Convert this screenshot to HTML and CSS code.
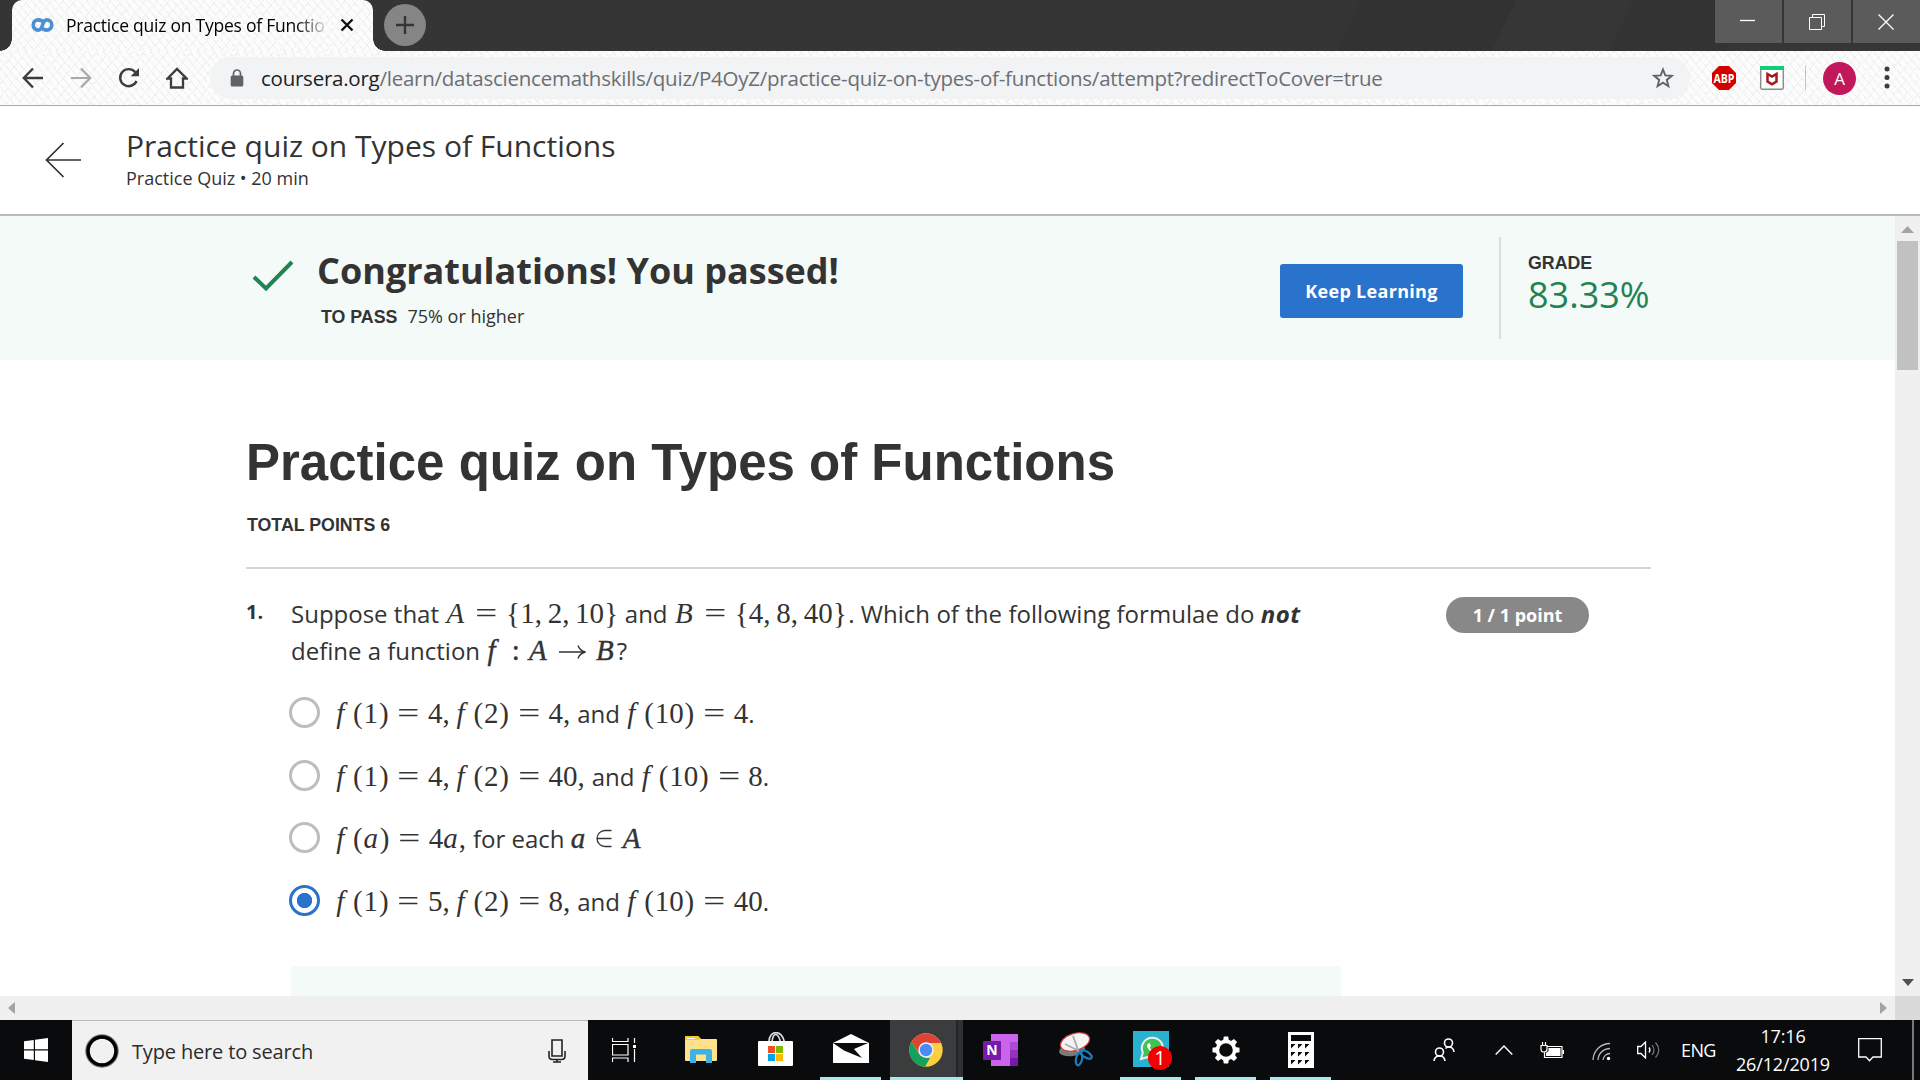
FILE: index.html
```html
<!DOCTYPE html>
<html lang="en">
<head>
<meta charset="utf-8">
<title>Practice quiz on Types of Functions</title>
<link rel="stylesheet" href="styles.css">
</head>
<body>
<div class="tabstrip">
  <div class="tab">
    <svg class="tab-logo" width="23" height="14" viewBox="0 0 23 14"><path d="M12.500 4.500C11.200 2.600 9.500 1.900 7.300 1.900A5.100 5.100 0 0 0 7.300 12.100C12.300 12.100 10.700 1.900 15.700 1.900A5.100 5.100 0 0 1 15.700 12.100C13.500 12.100 11.800 11.400 10.500 9.500" fill="none" stroke="#4a90d2" stroke-width="3.600"/></svg>
    <span class="tab-title">Practice quiz on Types of Functio</span>
    <svg class="tab-close" width="14" height="14" viewBox="0 0 14 14"><path d="M1.500 1.500 12.500 12.500M12.500 1.500 1.500 12.500" stroke="#111" stroke-width="2.400"/></svg>
  </div>
  <div class="new-tab"><svg width="18" height="18" viewBox="0 0 18 18"><path d="M9 0V18M0 9H18" stroke="#353535" stroke-width="2.400"/></svg></div>
  <div class="win-buttons">
    <span><svg width="16" height="16" viewBox="0 0 16 16"><path d="M0 6.500H15" stroke="#fff" stroke-width="1.300"/></svg></span>
    <span><svg width="16" height="16" viewBox="0 0 16 16"><path d="M3.500 3.500V.5H15.500V12.500H12.500M.5 3.500H12.500V15.500H.5Z" fill="none" stroke="#fff"/></svg></span>
    <span><svg width="16" height="16" viewBox="0 0 16 16"><path d="M.5 .5 15.500 15.500M15.500 .5 .5 15.500" stroke="#fff" stroke-width="1.300"/></svg></span>
  </div>
</div>
<div class="toolbar">
  <svg class="nav" width="22" height="22" viewBox="0 0 22 22"><path d="M21 11H2M11 1.500 1.800 11 11 20.500" fill="none" stroke="#3c3c3c" stroke-width="2.400"/></svg>
  <svg class="nav" width="22" height="22" viewBox="0 0 22 22"><path d="M1 11H20M11 1.500 20.200 11 11 20.500" fill="none" stroke="#a8a8a8" stroke-width="2.200"/></svg>
  <svg class="nav" width="22" height="22" viewBox="0 0 22 22"><path d="M18.500 14A8.500 8.500 0 1 1 17.300 5.300" fill="none" stroke="#3c3c3c" stroke-width="2.400"/><path d="M21 1V9.300H12.700Z" fill="#3c3c3c"/></svg>
  <svg class="nav" width="22" height="22" viewBox="0 0 22 22"><path d="M1.500 11.500 11 2 20.500 11.500H17V20.500H5V11.500Z" fill="none" stroke="#3c3c3c" stroke-width="2.300"/></svg>
  <div class="omnibox">
    <svg class="lock" width="14" height="18" viewBox="0 0 14 18"><rect x=".7" y="6.500" width="12.600" height="11" rx="1.500" fill="#5f6368"/><path d="M3.500 7V4.500A3.500 3.500 0 0 1 10.500 4.500V7" fill="none" stroke="#5f6368" stroke-width="1.700"/></svg>
    <span class="url"><b>coursera.org</b>/learn/datasciencemathskills/quiz/P4OyZ/practice-quiz-on-types-of-functions/attempt?redirectToCover=true</span>
    <svg class="star" width="22" height="22" viewBox="0 0 22 22"><path d="M11 2.500 13.300 8.400 19.800 8.800 14.800 12.900 16.400 19.200 11 15.700 5.600 19.200 7.200 12.900 2.200 8.800 8.700 8.400Z" fill="none" stroke="#5f6368" stroke-width="1.900"/></svg>
  </div>
  <svg class="abp" width="26" height="26" viewBox="0 0 26 26"><path d="M8 1H18L25 8V18L18 25H8L1 18V8Z" fill="#d40000"/><text x="13" y="17.500" text-anchor="middle" textLength="21" lengthAdjust="spacingAndGlyphs">ABP</text></svg>
  <svg class="mcafee" width="24" height="24" viewBox="0 0 24 24"><rect x=".7" y=".7" width="22.600" height="22.600" rx="1.500" fill="#fff" stroke="#8c8c8c" stroke-width="1.400"/><path d="M0 0H24V4H0Z" fill="#12ce78"/><path d="M7.500 8 12 10.600 16.500 8V15.500L12 18.300 7.500 15.500Z" fill="none" stroke="#a3191d" stroke-width="2.500"/></svg>
  <i class="sep"></i>
  <span class="avatar">A</span>
  <svg class="dots" width="6" height="24" viewBox="0 0 6 24"><g fill="#3c3c3c"><circle cx="3" cy="3" r="2.500"/><circle cx="3" cy="11.500" r="2.500"/><circle cx="3" cy="20" r="2.500"/></g></svg>
</div>

<header class="quiz-header">
  <svg width="36" height="36" viewBox="0 0 36 36"><path d="M36 18H1.500M18.500 1 1.500 18 18.500 35" fill="none" stroke="#333" stroke-width="1.700"/></svg>
  <div>
    <div class="quiz-title">Practice quiz on Types of Functions</div>
    <div class="quiz-sub">Practice Quiz • 20 min</div>
  </div>
</header>

<div class="viewport">
  <main class="page">
    <section class="banner">
      <svg class="check" width="42" height="32" viewBox="0 0 42 32"><path d="M2 17 14 28.500 40 2" fill="none" stroke="#1f8354" stroke-width="4"/></svg>
      <div class="result">
        <div class="congrats">Congratulations! You passed!</div>
        <div class="to-pass"><b>TO PASS</b><span>75% or higher</span></div>
      </div>
      <button class="keep">Keep Learning</button>
      <div class="grade"><b>GRADE</b><span>83.33%</span></div>
    </section>
    <section class="content">
      <h1>Practice quiz on Types of Functions</h1>
      <div class="points">TOTAL POINTS 6</div>
      <div class="question">
        <div class="number">1.</div>
        <div class="body">
          <div class="prompt">
            <div><span class="t1">Suppose that</span> <span class="m"><i class="cap">A</i><u>=</u><s>{</s><q>1</q><em>,</em><q>2</q><em>,</em><q>10</q><s>}</s></span> <span class="t2">and</span> <span class="m"><i class="cap">B</i><u>=</u><s>{</s><q>4</q><em>,</em><q>8</q><em>,</em><q>40</q><s>}</s></span><span class="t3">. Which of the following formulae do <strong>not</strong></span></div>
            <div><span class="t1">define a function</span> <span class="m heavy"><i class="f">f</i><u class="colon">:</u><i class="cap">A</i><u class="arrow"><svg width="29" height="16" viewBox="0 0 29 16"><path d="M1 8H27M20 1.500Q21.500 6.500 27.500 8Q21.500 9.500 20 14.500" fill="none" stroke="#333" stroke-width="1.300"/></svg></u><i class="cap">B</i></span><span class="qm">?</span></div>
          </div>
          <div class="options">
            <div class="option"><i class="radio"></i><div><span class="m"><i class="f">f</i><s class="p">(</s><q>1</q><s class="p">)</s><u>=</u><q>4</q><em>,</em><i class="f">f</i><s class="p">(</s><q>2</q><s class="p">)</s><u>=</u><q>4</q><em class="end">,</em></span> <span>and</span> <span class="m"><i class="f">f</i><s class="p">(</s><q>10</q><s class="p">)</s><u>=</u><q>4</q></span>.</div></div>
            <div class="option"><i class="radio"></i><div><span class="m"><i class="f">f</i><s class="p">(</s><q>1</q><s class="p">)</s><u>=</u><q>4</q><em>,</em><i class="f">f</i><s class="p">(</s><q>2</q><s class="p">)</s><u>=</u><q>40</q><em class="end">,</em></span> <span>and</span> <span class="m"><i class="f">f</i><s class="p">(</s><q>10</q><s class="p">)</s><u>=</u><q>8</q></span>.</div></div>
            <div class="option"><i class="radio"></i><div><span class="m"><i class="f">f</i><s class="p">(</s><i class="a">a</i><s class="p">)</s><u>=</u><q>4</q><i class="a">a</i><em class="end">,</em></span> <span>for each</span> <span class="m"><i class="a heavy">a</i><u class="in"><svg width="18" height="19" viewBox="0 0 18 19"><path d="M16.500 1.500H10A7.800 7.800 0 0 0 10 17.500H16.500M2 9.500H16.500" fill="none" stroke="#333" stroke-width="1.300"/></svg></u><i class="cap heavy">A</i></span></div></div>
            <div class="option"><i class="radio on"></i><div><span class="m"><i class="f">f</i><s class="p">(</s><q>1</q><s class="p">)</s><u>=</u><q>5</q><em>,</em><i class="f">f</i><s class="p">(</s><q>2</q><s class="p">)</s><u>=</u><q>8</q><em class="end">,</em></span> <span>and</span> <span class="m"><i class="f">f</i><s class="p">(</s><q>10</q><s class="p">)</s><u>=</u><q>40</q></span>.</div></div>
          </div>
          <div class="feedback"></div>
        </div>
        <div class="pill">1 / 1 point</div>
      </div>
    </section>
  </main>
  <div class="vscroll">
    <svg width="13" height="7" viewBox="0 0 13 7"><path d="M6.500 0 13 7H0Z" fill="#a3a3a3"/></svg>
    <i class="thumb"></i>
    <svg class="down" width="12" height="7" viewBox="0 0 12 7"><path d="M0 0H12L6 7Z" fill="#505050"/></svg>
  </div>
</div>
<div class="hscroll">
  <svg width="7" height="12" viewBox="0 0 7 12"><path d="M7 0V12L0 6Z" fill="#a3a3a3"/></svg>
  <svg class="right" width="7" height="12" viewBox="0 0 7 12"><path d="M0 0V12L7 6Z" fill="#a3a3a3"/></svg>
  <i class="corner"></i>
</div>

<footer class="taskbar">
  <div class="start"><svg width="24" height="24" viewBox="0 0 24 24"><path d="M0 3.300 9.800 2V11.300H0ZM11 1.800 24 0V11.300H11ZM0 12.500H9.800V22L0 20.700ZM11 12.500H24V24L11 22.200Z" fill="#fff"/></svg></div>
  <div class="search">
    <svg width="34" height="34" viewBox="0 0 34 34"><circle cx="17" cy="17" r="14.500" fill="none" stroke="#777" stroke-width="4.500"/><circle cx="17" cy="17" r="14" fill="none" stroke="#000" stroke-width="3.400"/></svg>
    <span>Type here to search</span>
    <svg class="mic" width="18" height="24" viewBox="0 0 18 24"><path d="M4 1H14V17H4ZM1 12V17Q1 20.500 4.500 20.500H13.500Q17 20.500 17 17V12M9 20.500V23M5 23H13" fill="none" stroke="#222" stroke-width="1.600"/></svg>
  </div>
  <div class="apps">
    <div class="app view"><svg width="25" height="24" viewBox="0 0 25 24"><path d="M.5 0V3.500H16V0M.5 6.500H16V17H.5ZM.5 24V20H16V24M22.500 0V5M22.500 11V24" fill="none" stroke="#fff" stroke-width="1.200"/><path d="M21 7H24V10H21Z" fill="#fff"/></svg></div>
    <div class="app"><svg width="32" height="27" viewBox="0 0 32 27"><path d="M0 1Q0 0 1 0H13L16 3H31Q32 3 32 4V24Q32 25 31 25H1Q0 25 0 24Z" fill="#ffe28b"/><path d="M0 0H13L15.500 2.500 13.500 4H0Z" fill="#fbc52c"/><path d="M2 2.500H10" stroke="#fff"/><path d="M5 27V15Q5 13 7 13H25Q27 13 27 15V27H21V18.500H11V27Z" fill="#3db2e6"/></svg></div>
    <div class="app store"><svg width="35" height="34" viewBox="0 0 35 34"><path d="M11 10C11 -2.500 24 -2.500 26.500 10M14 10C15 0 20 0 22.500 10" fill="none" stroke="#ddd" stroke-width="1.700"/><rect y="9" width="35" height="25" rx="1" fill="#fff"/><path d="M10 14H17V21H10Z" fill="#f25022"/><path d="M18 14H25V21H18Z" fill="#7fba00"/><path d="M10 22H17V29H10Z" fill="#00a4ef"/><path d="M18 22H25V29H18Z" fill="#ffb900"/></svg></div>
    <div class="app open mail"><svg width="36" height="29" viewBox="0 0 36 29"><path d="M0 9 18 0 36 9V29H0Z" fill="#fff"/><path d="M0 9H35L21 15 29 24 11 16.500Z" fill="#0a0b0d"/></svg></div>
    <div class="app open chrome"><svg width="34" height="34" viewBox="0 0 34 34"><circle cx="17" cy="17" r="16.700" fill="#ffcd40"/><path d="M2.500 8.700A16.700 16.700 0 0 1 32 10H17L10 20.500Z" fill="#dc4437"/><path d="M2.500 8.700 10 21 17 25H21L16 33.700A16.700 16.700 0 0 1 2.500 8.700Z" fill="#12a15e"/><circle cx="17" cy="17" r="7.700" fill="#f2f2f2"/><circle cx="17" cy="17" r="6.200" fill="#4c8bf5"/></svg></div>
    <div class="app"><svg width="35" height="32" viewBox="0 0 35 32"><rect x="8" width="27" height="32" fill="#ca64ea"/><path d="M27 8H35V16H27Z" fill="#ae4bd5"/><path d="M27 16H35V24H27Z" fill="#9332bf"/><path d="M27 24H35V32H27Z" fill="#7719aa"/><rect y="7" width="18" height="19" rx="1" fill="#7719aa"/><text x="9" y="21" text-anchor="middle" class="note-n">N</text></svg></div>
    <div class="app"><svg width="34" height="36" viewBox="0 0 34 36"><ellipse cx="13" cy="18" rx="13" ry="6" fill="#7a7a7a" transform="rotate(-8 13 18)"/><ellipse cx="16" cy="10" rx="15" ry="8.500" fill="#f4f4f4" stroke="#d8393b" stroke-width="1.200" transform="rotate(-17 16 10)"/><path d="M14 4 19 18M6 12 20 19" stroke="#aaa" stroke-width="1.800"/><ellipse cx="20" cy="27" rx="3" ry="6.500" fill="none" stroke="#1a7fc1" stroke-width="2.200" transform="rotate(12 20 27)"/><ellipse cx="27" cy="22.500" rx="3" ry="6.500" fill="none" stroke="#1a7fc1" stroke-width="2.200" transform="rotate(-58 27 22.500)"/></svg></div>
    <div class="app open"><svg width="39" height="40" viewBox="0 0 39 40" class="wa"><rect width="36" height="36" fill="#28b2d0"/><path d="M8 28 9.800 21.500A10.500 10.500 0 1 1 14 26.200Z" fill="#3fc351" stroke="#eee" stroke-width="2"/><path d="M14.500 13Q13 16 17 20T24 22.500L25 20 21.800 18.500 20 20Q17.500 18.500 16.800 16.500L18 15 16.500 12Z" fill="#fff"/><circle cx="27" cy="27" r="12" fill="#f40000"/><text x="27" y="34" text-anchor="middle" class="badge">1</text></svg></div>
    <div class="app open"><svg width="28" height="28" viewBox="-14 -14 28 28"><g fill="#fff"><path id="tooth" d="M-3 -9 -2.200 -13.500H2.200L3 -9Z"/><use href="#tooth" transform="rotate(45)"/><use href="#tooth" transform="rotate(90)"/><use href="#tooth" transform="rotate(135)"/><use href="#tooth" transform="rotate(180)"/><use href="#tooth" transform="rotate(225)"/><use href="#tooth" transform="rotate(270)"/><use href="#tooth" transform="rotate(315)"/></g><circle r="8.600" fill="none" stroke="#fff" stroke-width="3.600"/></svg></div>
    <div class="app open"><svg width="26" height="36" viewBox="0 0 26 36"><path d="M0 0H26V36H0Z" fill="#fff"/><path d="M3 3H23V9H3ZM3 12H7.500L3 16.500ZM10 12H14.500L10 16.500ZM17 12H21.500L17 16.500ZM3 20H7.500L3 24.500ZM10 20H14.500L10 24.500ZM17 20H21.500L17 24.500ZM3 28H7.500L3 32.500ZM10 28H14.500L10 32.500ZM17 28H21.500L17 32.500Z" fill="#0a0b0d"/></svg></div>
  </div>
  <div class="tray">
    <svg class="people" width="22" height="24" viewBox="0 0 22 24"><g fill="none" stroke="#fff" stroke-width="1.600"><circle cx="15.500" cy="5" r="4"/><circle cx="6.500" cy="14" r="4"/><path d="M1 23Q1.500 18 6.500 18T12 23M12.500 10.500Q14 9 15.500 9Q20.500 9 21 14"/></g></svg>
    <svg class="chev" width="18" height="10" viewBox="0 0 18 10"><path d="M.7 9.500 9 1 17.300 9.500" fill="none" stroke="#fff" stroke-width="1.400"/></svg>
    <svg class="batt" width="24" height="17" viewBox="0 0 24 17"><path d="M7.500 4.500H22V15.500H4.500V10M2.500 0V3.500M5.500 0V3.500M1 3.500H7V7Q7 10 4 10T1 7Z" fill="none" stroke="#fff" stroke-width="1.200"/><path d="M8.500 6H20.500V14H6V11L8.500 9ZM22.500 8H24V12H22.500Z" fill="#fff"/></svg>
    <svg class="wifi" width="19" height="19" viewBox="0 0 19 19"><g fill="none" stroke="#bbb" stroke-width="1.300"><path d="M1 18A17 17 0 0 1 18 1.500M6 18A12 12 0 0 1 18 6.500M11 18A7 7 0 0 1 18 11.500"/></g><circle cx="16.500" cy="16.500" r="1.700" fill="#fff"/></svg>
    <svg class="vol" width="23" height="18" viewBox="0 0 23 18"><path d="M.7 5.500H4L8.500 1V17L4 12.500H.7Z" fill="none" stroke="#fff" stroke-width="1.300"/><path d="M12 6.500Q14 9 12 11.500" fill="none" stroke="#fff" stroke-width="1.300"/><path d="M15 4Q19 9 15 14M18.500 1.500Q25 9 18.500 16.500" fill="none" stroke="#777" stroke-width="1.200"/></svg>
    <span class="lang">ENG</span>
    <div class="clock"><span class="time">17:16</span><span>26/12/2019</span></div>
    <svg class="notif" width="24" height="24" viewBox="0 0 24 24"><path d="M.7 .7H23.300V19H15L11.500 22.800 8 19H.7Z" fill="none" stroke="#fff" stroke-width="1.300"/></svg>
    <i class="desk"></i>
  </div>
</footer>
</body>
</html>
```
FILE: styles.css
```css
* { box-sizing: border-box; }
body { margin: 0; width: 1920px; height: 1080px; overflow: hidden; display: flex; flex-direction: column; background: #fff; color: #333; font-family: "Open Sans", "Noto Sans", sans-serif; }
svg { display: block; flex: none; }

/* browser chrome */
.tabstrip { height: 51px; flex: none; display: flex; background: linear-gradient(115deg, #353535 0 70%, #323232 70% 78%, #363636 78% 84%, #333 84% 90%, #363636 90%); }
.tab, .toolbar { background-color: #fcfcfc; background-image: repeating-linear-gradient(50deg, transparent 0 5px, #f0f0f0 5px 6px), repeating-linear-gradient(-50deg, transparent 0 8px, #f2f2f2 8px 9px); }
.tab { position: relative; width: 361px; margin-left: 12px; border-radius: 10px 10px 0 0; display: flex; align-items: center; padding: 0 19px 1px; }
.tab::before, .tab::after { content: ""; position: absolute; bottom: 0; width: 12px; height: 12px; }
.tab::before { left: -12px; background: radial-gradient(circle at 0 0, transparent 11.500px, #fafafa 12px); }
.tab::after { right: -12px; background: radial-gradient(circle at 100% 0, transparent 11.500px, #fafafa 12px); }
.tab-title { margin-left: 12px; width: 264px; overflow: hidden; white-space: nowrap; font-size: 17.500px; letter-spacing: -0.240px; line-height: 26px; color: #000; -webkit-mask-image: linear-gradient(90deg, #000 88%, transparent 101%); mask-image: linear-gradient(90deg, #000 88%, transparent 101%); }
.tab-close { margin-left: 13px; }
.new-tab { width: 42px; height: 42px; margin: 4px 0 0 11px; border-radius: 50%; background: #858585; display: grid; place-items: center; }
.win-buttons { margin-left: auto; display: flex; gap: 2px; }
.win-buttons span { width: 67px; height: 43px; padding-right: 2px; background: #5b5b5b; display: grid; place-items: center; }
.toolbar { height: 55px; flex: none; display: flex; align-items: center; padding-left: 22px; border-bottom: 1px solid #aaa; }
.nav { margin-right: 26px; }
.omnibox { width: 1480px; height: 42px; margin-left: -4px; border-radius: 21px; background: #f1f3f4; display: flex; align-items: center; padding: 0 16px 0 20px; }
.url { margin-left: 17px; font-size: 20.500px; letter-spacing: -0.245px; color: #6b6f73; white-space: nowrap; }
.url b { font-weight: 400; color: #202124; }
.star { margin-left: auto; }
.abp { margin-left: 21px; }
.abp text { font: bold 12px "Open Sans", sans-serif; fill: #fff; }
.mcafee { margin-left: 23px; }
.sep { width: 1px; height: 24px; margin-left: 21px; background: #c3c3c3; }
.avatar { width: 33px; height: 33px; margin-left: 17px; border-radius: 50%; background: #c2185b; color: #fff; font-size: 17px; display: grid; place-items: center; }
.dots { margin-left: 28px; }

/* quiz header */
.quiz-header { height: 110px; flex: none; display: flex; align-items: center; padding-left: 45px; border-bottom: 2px solid #bbb; }
.quiz-header > div { margin-left: 45px; margin-top: -3px; white-space: nowrap; }
.quiz-title { font-size: 30px; line-height: 38px; }
.quiz-sub { font-size: 18px; line-height: 26px; }

.viewport { height: 780px; flex: none; display: flex; }
.page { width: 1895px; overflow: hidden; }
.banner { height: 144px; background: #f4faf8; display: flex; padding-left: 252px; }
.check { margin-top: 44px; }
.result { margin-left: 23px; width: 963px; padding-top: 31px; white-space: nowrap; }
.congrats { font-size: 36px; line-height: 48px; font-weight: 700; }
.to-pass { display: flex; align-items: baseline; gap: 10px; margin: 9px 0 0 4px; font-size: 18px; line-height: 24px; }
.to-pass b, .grade b, .points { font-family: "Liberation Sans", Arial, sans-serif; font-weight: 700; font-size: 17.800px; }
.keep { width: 183px; height: 54px; margin-top: 48px; padding: 0; border: 0; border-radius: 3px; background: #2a73cc; color: #fff; font: 700 18px "Open Sans", sans-serif; letter-spacing: .3px; }
.grade { height: 102px; margin: 21px 0 0 36px; padding: 14px 0 0 27px; border-left: 2px solid #ddd; display: flex; flex-direction: column; }
.grade b { line-height: 24px; }
.grade span { font-size: 36px; line-height: 40px; color: #1f8354; }
.content { padding-left: 246px; }
h1 { margin: 72px 0 0; font: 700 51px/62px "Liberation Sans", Arial, sans-serif; white-space: nowrap; }
.points { margin-top: 19px; padding-left: 1px; line-height: 24px; width: 1405px; height: 56px; border-bottom: 2px solid #d5d5d5; }
.question { display: flex; align-items: flex-start; width: 1405px; }
.number { width: 45px; margin-top: 29px; font-weight: 700; font-size: 20px; line-height: 28px; }
.body { width: 1050px; font-size: 24px; }
.prompt { padding-top: 26px; white-space: nowrap; }
.prompt > div { height: 37px; line-height: 37px; }
.t3 { margin-left: 1px; letter-spacing: .04px; }
.t3 strong { font-style: italic; letter-spacing: .5px; }
.options { padding-top: 14px; }
.option { display: flex; height: 62.600px; align-items: center; line-height: 40px; white-space: nowrap; }
.option > div { margin-left: 15px; }
.radio { width: 31px; height: 31px; margin: -3px 0 0 -2px; border-radius: 50%; border: 3px solid #bdbdbd; }
.radio.on { border-color: #2a73cc; background: radial-gradient(circle, #2a73cc 7.300px, #fff 8px); }
.feedback { height: 60px; margin-top: 33px; background: #f4faf8; }
.pill { width: 143px; height: 36px; margin: 28px 0 0 105px; border-radius: 18px; background: #888; color: #fff; font-weight: 700; font-size: 18px; line-height: 36px; text-align: center; }

/* math: each token gets the advance width of its glyph in em */
.m { font-family: "Liberation Serif", "Times New Roman", serif; font-size: 29px; line-height: 30px; }
.m i, .m s, .m u, .m q, .m em { display: inline-block; text-decoration: none; text-align: center; font-style: normal; }
.m q { quotes: none; }
.m i { font-style: italic; text-align: left; }
.m .f { width: .597em; padding-left: .04em; }
.m .a { width: .529em; }
.m .cap { width: .755em; padding-left: .04em; }
.m s { width: .5em; }
.m .p { width: .389em; }
.m u { width: 1.334em; transform: scaleX(1.350); }
.m .colon { width: .834em; transform: none; }
.m .arrow { width: 1.556em; transform: none; }
.m .in { width: 1.223em; transform: none; }
.m .arrow svg, .m .in svg { display: inline-block; }
.m em { width: .445em; text-align: left; }
.m em.end { width: .278em; }
.heavy { -webkit-text-stroke: .4px #333; }

/* scrollbars */
.vscroll { width: 25px; background: #f0f0f0; display: flex; flex-direction: column; align-items: center; padding: 10px 0; }
.thumb { width: 21px; height: 129px; margin-top: 8px; background: #c1c1c1; }
.down { margin-top: auto; }
.hscroll { height: 24px; flex: none; background: #f0f0f0; display: flex; align-items: center; padding-left: 8px; }
.right { margin-left: auto; }
.corner { width: 25px; height: 24px; margin-left: 8px; background: #dadada; }

/* taskbar */
.taskbar { height: 60px; flex: none; background: #0a0b0d; display: flex; color: #fff; }
.start { width: 72px; display: grid; place-items: center; }
.search { width: 516px; background: #f1f1f1; border-top: 1px solid #b8b8b8; display: flex; align-items: center; padding: 0 22px 0 13px; color: #2b2b2b; font-size: 20px; white-space: nowrap; }
.search span { margin: 1px 0 0 13px; letter-spacing: -.16px; }
.mic { margin-left: auto; }
.apps { display: flex; margin-left: 1px; }
.app { width: 75px; display: flex; justify-content: center; align-items: center; padding: 0 2px 1px 0; }
.view { padding-right: 5px; }
.store { padding: 0 2px 3px 0; }
.mail { padding-bottom: 4px; }
.open { background: linear-gradient(#a8e6f2, #a8e6f2) 6px bottom / 61px 3px no-repeat; }
.chrome { width: 73px; margin: 0 1px; padding-right: 2px; background: linear-gradient(#a8e6f2, #a8e6f2) bottom / 100% 3px no-repeat, linear-gradient(90deg, #3b3c3d 66px, #242526 66px 68px, #303132 68px); }
.wa { margin: 3px 0 0 3px; }
.note-n { font: bold 14px "Open Sans", sans-serif; fill: #fff; }
.badge { font: 20px "Open Sans", sans-serif; fill: #fff; }
.tray { margin-left: auto; display: flex; align-items: center; font-size: 18px; }
.chev { margin-left: 40px; }
.batt { margin-left: 27px; }
.wifi { margin: 2px 0 0 28px; }
.vol { margin-left: 26px; }
.lang { width: 34px; margin-left: 21px; letter-spacing: -.6px; }
.clock { width: 96px; margin-left: 20px; display: flex; flex-direction: column; align-items: center; line-height: 28px; white-space: nowrap; }
.clock span { letter-spacing: -.15px; }
.notif { margin-left: 27px; }
.desk { width: 2px; height: 60px; margin: 0 6px 0 30px; background: #777; }
```
